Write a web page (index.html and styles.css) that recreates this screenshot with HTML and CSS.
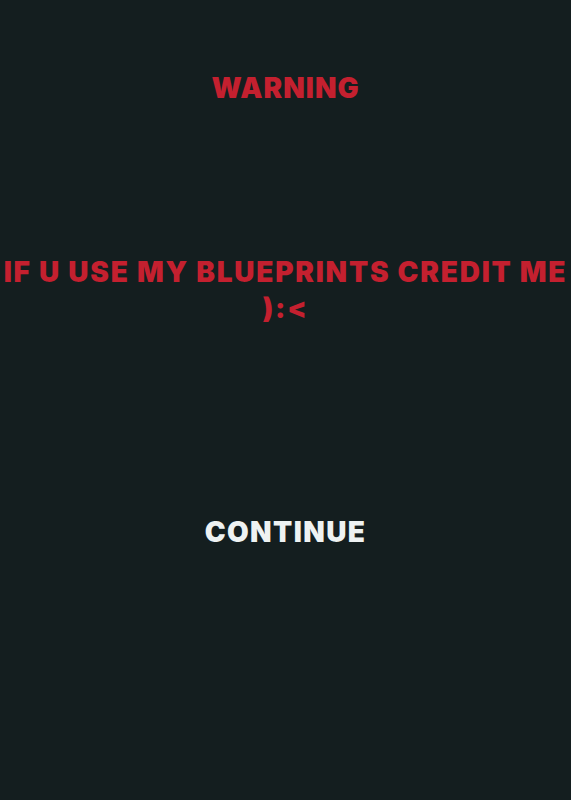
FILE: index.html
```html
<!DOCTYPE html>
<html lang="en">
<head>
  <meta charset="UTF-8" />
  <meta name="viewport" content="width=device-width, initial-scale=1.0"/>
  <title>Warning</title>
  <link rel="stylesheet" href="styles.css">
</head>
<body>
  <div class="screen">
    <h1 class="title">WARNING</h1>
    <p class="message">IF U USE MY BLUEPRINTS CREDIT ME ):&lt;</p>
    <button class="continue">CONTINUE</button>
  </div>
</body>
</html>
```

FILE: styles.css
```css
body {
  margin: 0;
  background: #141e1f;
  font-family: 'Inter', sans-serif;
}

.screen {
  height: 800px;
  display: flex;
  flex-direction: column;
  align-items: center;
  text-align: center;
}

.title {
  margin: 72px 0 0;
  font-size: 28px;
  font-weight: 900;
  line-height: 32px;
  letter-spacing: 1px;
  color: #c4202f;
}

.message {
  margin: 150px 0 0;
  font-size: 28px;
  font-weight: 900;
  line-height: 36px;
  letter-spacing: 1.75px;
  color: #c4202f;
}

.continue {
  margin-top: 189px;
  padding: 0;
  border: none;
  background: none;
  font-family: inherit;
  font-size: 28px;
  font-weight: 900;
  letter-spacing: 1.4px;
  color: #eef2f2;
  cursor: pointer;
}
```
